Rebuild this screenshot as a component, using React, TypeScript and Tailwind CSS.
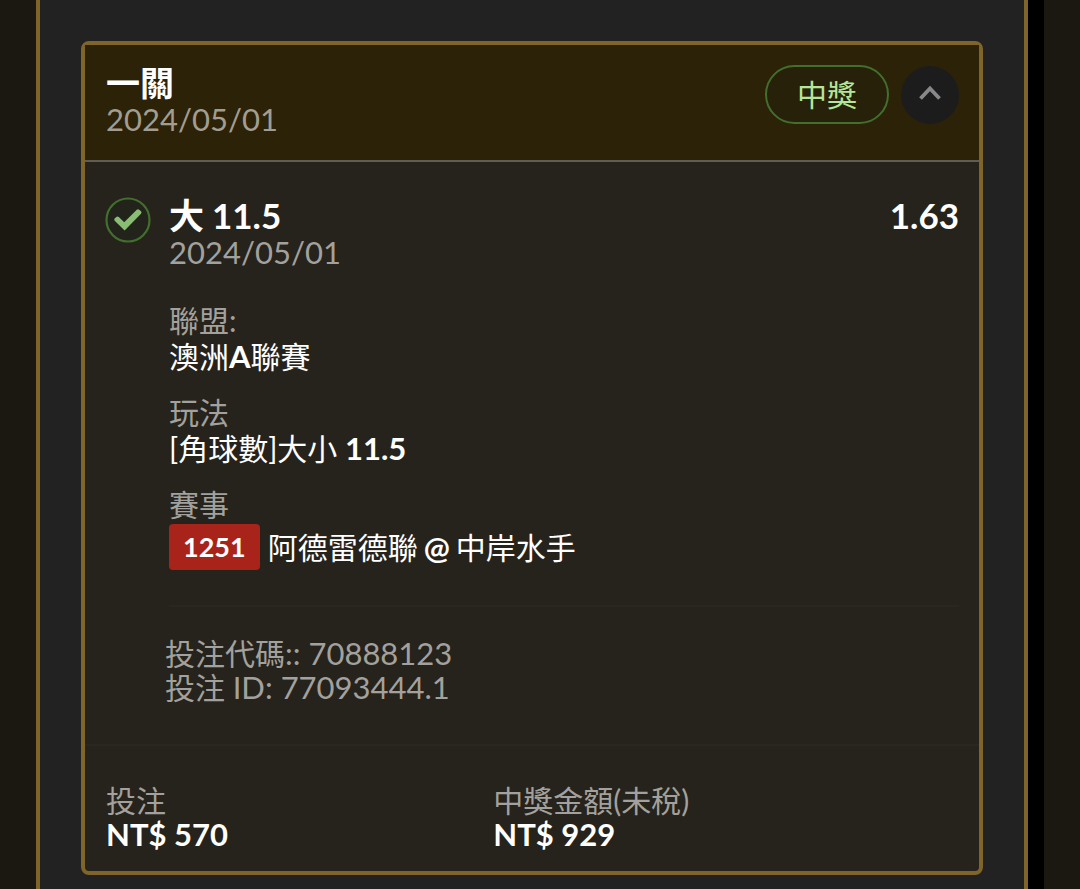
import { useState, type ReactNode } from "react";

function Latin({ children }: { children: ReactNode }) {
  return <span className="text-[31px]">{children}</span>;
}

function Field({ label, children }: { label: ReactNode; children: ReactNode }) {
  return (
    <div>
      <dt className="text-[#a3a19d]">{label}</dt>
      <dd className="text-white">{children}</dd>
    </div>
  );
}

function CheckBadge() {
  return (
    <svg
      viewBox="0 0 46 46"
      className="size-[46px] shrink-0"
      fill="none"
      role="img"
      aria-label="中獎"
    >
      <circle cx="23" cy="23" r="21.5" fill="#22231a" stroke="#426f2d" strokeWidth="2.2" />
      <path
        d="M9.7 23.8 Q8.6 22.5 9.8 21.3 L11.3 19.9 Q12.6 19 13.8 20.1 L19.2 25.2 L31.8 12.8 Q33 11.9 34.2 12.8 L36 14.2 Q37 15.5 36 16.8 L19.6 33.4 Z"
        fill="#8abd74"
      />
    </svg>
  );
}

export default function App() {
  const [open, setOpen] = useState(true);

  return (
    <div
      lang="zh-Hant"
      className="flex min-h-screen bg-[#1b1811] px-9 font-['Lato','Noto_Sans_CJK_TC',sans-serif] text-[30px] leading-[36px]"
    >
      <main className="flex-1 border-x-4 border-[#80652a] bg-[#222222] px-[41px] pt-[41px] pb-[14px]">
        <article className="rounded-lg border-4 border-[#80652a] bg-[#26231c]">
          <header className="flex items-start justify-between border-b-2 border-[#625d52] bg-[#2b2208] px-5 pt-5 pb-[23px]">
            <div className="pl-px">
              <h2 className="text-[34px] font-bold text-white">一關</h2>
              <p className="text-[#a39d90]">
                <Latin>2024/05/01</Latin>
              </p>
            </div>
            <div className="flex items-center gap-3">
              <span className="rounded-full border-2 border-[#426f2d] bg-[#262108] px-[30px] py-[9px] leading-[37px] text-[#b5e59b]">
                中獎
              </span>
              <button
                type="button"
                aria-label="收合"
                aria-expanded={open}
                onClick={() => setOpen(!open)}
                className="flex size-[58px] items-center justify-center rounded-full bg-[#1c1c1d] pb-1"
              >
                <svg viewBox="0 0 24 16" className="h-4 w-6" fill="none">
                  <path
                    d={open ? "M2.5 13.5 12 3.5 21.5 13.5" : "M2.5 3.5 12 13.5 21.5 3.5"}
                    stroke="#88878a"
                    strokeWidth="3.8"
                  />
                </svg>
              </button>
            </div>
          </header>

          {open && (
            <section className="flex gap-[18px] px-5 pt-[35px] pb-10">
              <CheckBadge />
              <div className="flex-1">
                <div className="flex justify-between text-[35px] leading-[37px] font-bold text-white">
                  <h3 className="flex gap-2">
                    <span>大</span>
                    <span>11.5</span>
                  </h3>
                  <span>1.63</span>
                </div>
                <p className="text-[#a3a19d]">
                  <Latin>2024/05/01</Latin>
                </p>
                <dl className="mt-8 flex flex-col gap-5">
                  <Field label="聯盟:">
                    澳洲<b className="text-[31px]">A</b>聯賽
                  </Field>
                  <Field label="玩法">
                    [角球數]大小 <b className="text-[31px]">11.5</b>
                  </Field>
                  <Field label="賽事">
                    <span className="mt-0.5 flex items-center gap-2">
                      <b className="rounded bg-[#a82319] px-[14px] py-[5px] text-[27px]">1251</b>
                      <span className="flex gap-[6px]">
                        <span>阿德雷德聯</span>
                        <b className="text-[31px]">@</b>
                        <span>中岸水手</span>
                      </span>
                    </span>
                  </Field>
                </dl>
                <hr className="mt-[35px] border-t-2 border-[#2a2721]" />
                <div className="-ml-1 pt-[29px] leading-[34px] text-[#a3a19d]">
                  <p>
                    投注代碼<Latin>:: 70888123</Latin>
                  </p>
                  <p>
                    投注 <Latin>ID: 77093444.1</Latin>
                  </p>
                </div>
              </div>
            </section>
          )}

          <dl className="grid grid-cols-[5fr_6fr] border-t-2 border-[#2a2721] px-[21px] pt-[37px] pb-[20px] leading-[34px]">
            <Field label="投注">
              <b className="text-[31px]">NT$ 570</b>
            </Field>
            <Field label="中獎金額(未稅)">
              <b className="text-[31px]">NT$ 929</b>
            </Field>
          </dl>
        </article>
      </main>
      <div className="w-4 bg-black" />
    </div>
  );
}
